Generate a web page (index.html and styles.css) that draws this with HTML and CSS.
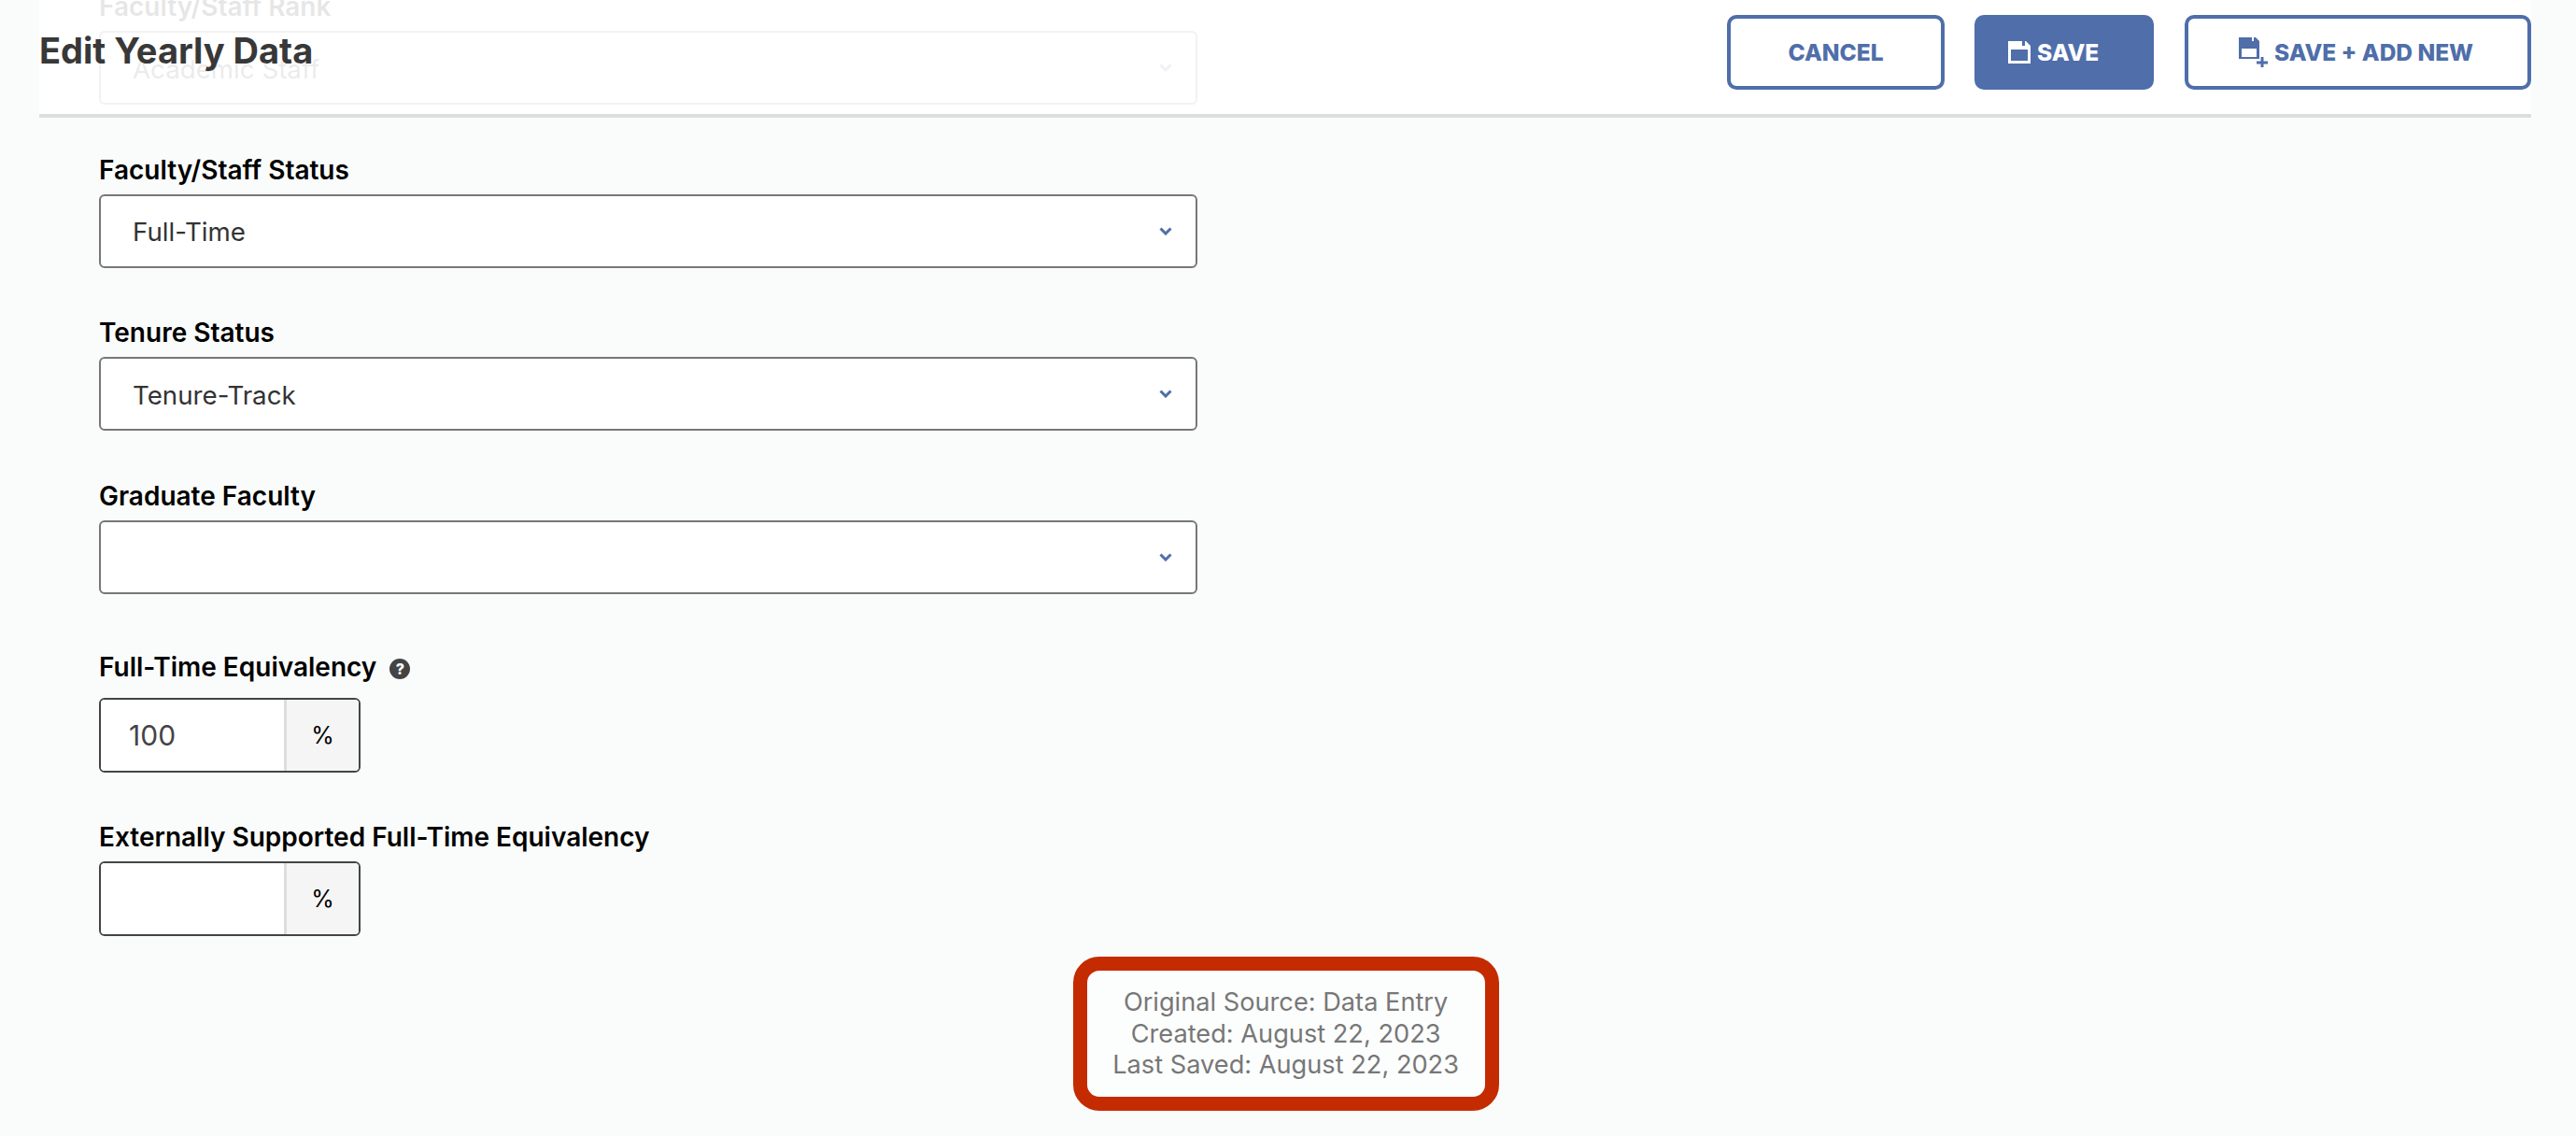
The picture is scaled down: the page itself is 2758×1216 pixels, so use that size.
FILE: index.html
```html
<!DOCTYPE html>
<html lang="en">
<head>
<meta charset="utf-8">
<title>Edit Yearly Data</title>
<link rel="stylesheet" href="styles.css">
</head>
<body>
<div class="page">
  <header class="topbar">
    <h1 class="title">Edit Yearly Data</h1>
    <div class="actions">
      <button class="btn btn-cancel" type="button">Cancel</button>
      <button class="btn btn-save" type="button">
        <svg class="icon-save" viewBox="0 0 24 24" aria-hidden="true"><path fill-rule="evenodd" d="M0 0H15V5H18V0H19L24 5V24H0ZM3 9V21H21V9Z"/></svg>
        <span>Save</span>
      </button>
      <button class="btn btn-add" type="button">
        <svg class="icon-add" viewBox="0 0 31 32" aria-hidden="true"><path fill-rule="evenodd" d="M0 0H14V4H16V0H18L22 4V23H0ZM3 12V21H19V12Z"/><path d="M19 25.5H31V28.5H19ZM23.5 21H26.500V32H23.500Z"/></svg>
        <span>Save + Add New</span>
      </button>
    </div>
  </header>

  <form class="form">
    <div class="field">
      <label class="label">Faculty/Staff Rank</label>
      <div class="select-wrap">
        <select class="select"><option>Academic Staff</option></select>
        <svg class="chevron" viewBox="0 0 14 9" aria-hidden="true"><path d="M1.500 1.500L7 7L12.500 1.500"/></svg>
      </div>
    </div>
    <div class="field">
      <label class="label">Faculty/Staff Status</label>
      <div class="select-wrap">
        <select class="select"><option>Full-Time</option></select>
        <svg class="chevron" viewBox="0 0 14 9" aria-hidden="true"><path d="M1.500 1.500L7 7L12.500 1.500"/></svg>
      </div>
    </div>
    <div class="field">
      <label class="label">Tenure Status</label>
      <div class="select-wrap">
        <select class="select"><option>Tenure-Track</option></select>
        <svg class="chevron" viewBox="0 0 14 9" aria-hidden="true"><path d="M1.500 1.500L7 7L12.500 1.500"/></svg>
      </div>
    </div>
    <div class="field">
      <label class="label">Graduate Faculty</label>
      <div class="select-wrap">
        <select class="select"><option></option></select>
        <svg class="chevron" viewBox="0 0 14 9" aria-hidden="true"><path d="M1.500 1.500L7 7L12.500 1.500"/></svg>
      </div>
    </div>
    <div class="field field-help">
      <label class="label label-help">Full-Time Equivalency <span class="help">?</span></label>
      <div class="input-group">
        <input class="input" type="text" value="100">
        <span class="addon">%</span>
      </div>
    </div>
    <div class="field field-last">
      <label class="label">Externally Supported Full-Time Equivalency</label>
      <div class="input-group">
        <input class="input" type="text" value="">
        <span class="addon">%</span>
      </div>
    </div>
  </form>

  <footer class="source">
    <div>Original Source: Data Entry</div>
    <div>Created: August 22, 2023</div>
    <div>Last Saved: August 22, 2023</div>
  </footer>
</div>
</body>
</html>
```
FILE: styles.css
```css
* { box-sizing: border-box; }
html, body { margin: 0; height: 1216px; overflow: hidden; background: #fafcfb; }
body { font-family: Inter, "Liberation Sans", sans-serif; color: #333; }

.page { position: relative; display: flow-root; margin: 0 48px 0 42px; }

.topbar {
  position: absolute; top: 0; left: 0; right: 0; z-index: 2;
  height: 126px;
  padding: 16px 0 0 0;
  display: flex; justify-content: space-between; align-items: flex-start;
  background: rgba(255, 255, 255, .9);
  border-bottom: 4px solid #ddd;
}
.title { margin: 15px 0 0; font-size: 38px; line-height: 46px; font-weight: 700; color: #383838; }
.actions { display: flex; gap: 32px; }

.btn {
  height: 80px;
  display: flex; align-items: center;
  border: 4px solid #4f6eaa; border-radius: 10px;
  background: #fff; color: #4f6eaa;
  font: 800 24.500px/1 Inter, "Liberation Sans", sans-serif;
  text-transform: uppercase;
}
.btn-cancel { width: 233px; justify-content: center; padding: 0; }
.btn-save { width: 192px; padding: 0 0 0 32px; background: #4f6eaa; color: #fff; gap: 7px; }
.btn-add { width: 371px; margin-left: 1px; padding: 0 0 0 54px; gap: 7px; }
.icon-save { width: 24px; height: 24px; fill: #fff; flex: none; }
.icon-add { width: 31px; height: 32px; fill: #4f6eaa; flex: none; margin-top: -1px; }

.form { padding: 0 64px; margin-top: -11px; }
.field { margin-bottom: 51.5px; }
.field-help { margin-bottom: 51px; padding-top: 9px; }
.field-last { margin-bottom: 0; }

.label {
  display: block; height: 35px; padding-top: 1px; margin-bottom: 9px;
  font-size: 28px; line-height: 34px; font-weight: 600; color: #000;
}
.label-help { margin-bottom: 16px; }
.help {
  display: inline-flex; align-items: center; justify-content: center;
  width: 22px; height: 22px; margin-left: 7px;
  border-radius: 50%; background: #444; color: #fff;
  font-size: 16px; line-height: 1; font-weight: 800;
  vertical-align: 2px;
}

.select-wrap { position: relative; width: 1176px; height: 79px; }
.select {
  appearance: none; -webkit-appearance: none;
  display: block; width: 100%; height: 100%;
  padding: 2px 60px 0 34px;
  border: 2px solid #777; border-radius: 6px;
  background: #fff; color: #333;
  font: 400 27.700px Inter, "Liberation Sans", sans-serif;
}
.chevron {
  position: absolute; right: 27px; top: 35px;
  width: 14px; height: 9px;
  fill: none; stroke: #4f6eaa; stroke-width: 3;
}

.input-group {
  display: flex; width: 280px; height: 80px;
  border: 2px solid #444; border-radius: 6px;
  overflow: hidden; background: #fff;
}
.input {
  flex: 1; min-width: 0; border: 0; outline: 0; padding: 0 0 0 30px;
  background: #fff; color: #444;
  font: 400 30px Inter, "Liberation Sans", sans-serif;
}
.addon {
  flex: none; width: 80px;
  display: flex; align-items: center; justify-content: center;
  background: #f5f5f5; border-left: 3px solid #ddd;
  color: #000; font-size: 25px;
}

.source {
  width: fit-content;
  margin: 22px 1105px 0 auto;
  padding: 17px 28px 17px 27px;
  border: 15px solid #c42b00; border-radius: 28px;
  background: #fcfdfd;
  text-align: center; color: #777;
  font-size: 27.2px; line-height: 33.600px;
}
```
